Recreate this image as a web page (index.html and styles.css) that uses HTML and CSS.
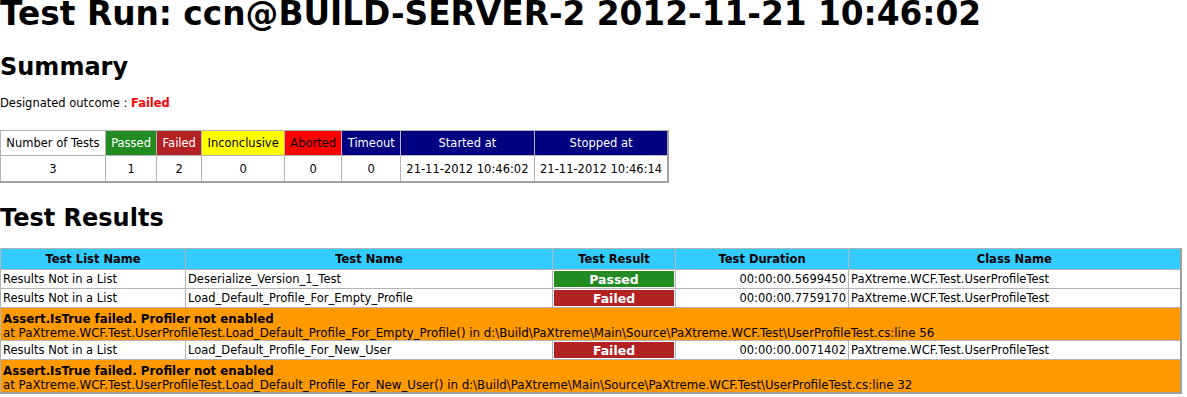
FILE: index.html
```html
<!DOCTYPE html>
<html>
<head>
<meta charset="utf-8">
<link rel="stylesheet" href="styles.css">
</head>
<body>
<h1 class="title">Test Run: ccn@BUILD-SERVER-2 2012-11-21 10:46:02</h1>
<h2 class="section summary-h">Summary</h2>
<p class="outcome">Designated outcome : <span class="fail-text">Failed</span></p>
<table class="summary">
  <tr>
    <th class="h-plain">Number of Tests</th>
    <th class="h-passed">Passed</th>
    <th class="h-failed">Failed</th>
    <th class="h-inconc">Inconclusive</th>
    <th class="h-aborted">Aborted</th>
    <th class="h-timeout">Timeout</th>
    <th class="h-time">Started at</th>
    <th class="h-time">Stopped at</th>
  </tr>
  <tr class="vals">
    <td>3</td><td>1</td><td>2</td><td>0</td><td>0</td><td>0</td>
    <td>21-11-2012 10:46:02</td><td>21-11-2012 10:46:14</td>
  </tr>
</table>
<h2 class="section results-h">Test Results</h2>
<table class="results">
  <colgroup>
    <col class="c1"><col class="c2"><col class="c3"><col class="c4"><col class="c5">
  </colgroup>
  <tr class="head">
    <th>Test List Name</th><th>Test Name</th><th>Test Result</th><th>Test Duration</th><th>Class Name</th>
  </tr>
  <tr>
    <td>Results Not in a List</td><td>Deserialize_Version_1_Test</td>
    <td class="res passed">Passed</td><td class="dur">00:00:00.5699450</td><td>PaXtreme.WCF.Test.UserProfileTest</td>
  </tr>
  <tr>
    <td>Results Not in a List</td><td>Load_Default_Profile_For_Empty_Profile</td>
    <td class="res failed">Failed</td><td class="dur">00:00:00.7759170</td><td>PaXtreme.WCF.Test.UserProfileTest</td>
  </tr>
  <tr class="err">
    <td colspan="5"><b>Assert.IsTrue failed. Profiler not enabled</b><br>at PaXtreme.WCF.Test.UserProfileTest.Load_Default_Profile_For_Empty_Profile() in d:\Build\PaXtreme\Main\Source\PaXtreme.WCF.Test\UserProfileTest.cs:line 56</td>
  </tr>
  <tr>
    <td>Results Not in a List</td><td>Load_Default_Profile_For_New_User</td>
    <td class="res failed">Failed</td><td class="dur">00:00:00.0071402</td><td>PaXtreme.WCF.Test.UserProfileTest</td>
  </tr>
  <tr class="err">
    <td colspan="5"><b>Assert.IsTrue failed. Profiler not enabled</b><br>at PaXtreme.WCF.Test.UserProfileTest.Load_Default_Profile_For_New_User() in d:\Build\PaXtreme\Main\Source\PaXtreme.WCF.Test\UserProfileTest.cs:line 32</td>
  </tr>
</table>
</body>
</html>
```
FILE: styles.css
```css
body {
  margin: 0;
  font-family: "DejaVu Sans", Verdana, sans-serif;
  font-size: 11.5px;
  color: #000;
  background: #fff;
}
.title {
  margin: 0;
  font-size: 32.8px;
  line-height: 29px;
  font-weight: bold;
}
.section {
  margin: 0;
  font-size: 24px;
  line-height: 30px;
  font-weight: bold;
}
.summary-h { margin-top: 23px; }
.outcome {
  margin: 14px 0 0 0;
  line-height: 14px;
}
.fail-text { color: #ff0000; font-weight: bold; }
table {
  border-collapse: collapse;
  font-size: 11.5px;
}
.summary {
  margin-top: 20px;
  border-right: 2px solid #a0a0a0;
  border-bottom: 2px solid #a0a0a0;
}
.summary th, .summary td {
  border: 1px solid #b4b4b4;
  height: 24px;
  padding: 0 5.3px;
  text-align: center;
  font-weight: normal;
  white-space: nowrap;
}
.summary .vals td { height: 25px; }
.h-plain { background: #fff; color: #000; }
.h-passed { background: #228b22; color: #fff; }
.h-failed { background: #b22222; color: #fff; }
.h-inconc { background: #ffff00; color: #000; }
.h-aborted { background: #ff0000; color: #000; }
.h-timeout { background: #000080; color: #fff; }
.h-time { background: #000080; color: #fff; }
.results-h { margin-top: 20px; }
.results {
  margin-top: 15px;
  width: 1180px;
  table-layout: fixed;
  border-right: 2px solid #a0a0a0;
  border-bottom: 2px solid #a0a0a0;
}
.c1 { width: 185px; }
.c2 { width: 367px; }
.c3 { width: 123px; }
.c4 { width: 173px; }
.c5 { width: 332px; }
.results th, .results td {
  border: 1px solid #b4b4b4;
  height: 18px;
  padding: 0 2px;
  white-space: nowrap;
  overflow: hidden;
}
.results .head th {
  height: 20px;
  background: #33ccff;
  color: #000;
  font-weight: bold;
  text-align: center;
}
.results .res {
  text-align: center;
  font-weight: bold;
  color: #fff;
  font-size: 12.5px;
  box-shadow: inset 0 0 0 1px #fff;
}
.results .passed { background: #228b22; }
.results .failed { background: #b22222; }
.results .dur { text-align: right; }
.results .err td {
  background: #ff9900;
  height: 27px;
  font-size: 11.8px;
  line-height: 14px;
  padding: 4px 2px 0 2px;
  vertical-align: top;
}
```
